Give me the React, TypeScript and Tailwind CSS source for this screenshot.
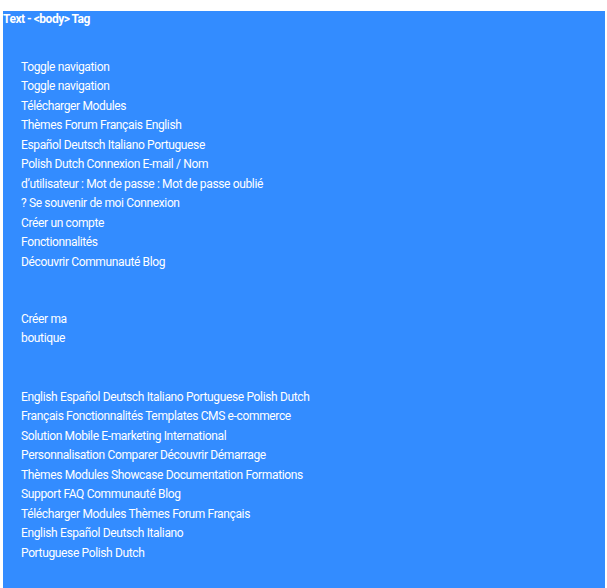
import React from "react";

const navLines = [
  "Toggle navigation",
  "Toggle navigation",
  "Télécharger Modules",
  "Thèmes Forum Français English",
  "Español Deutsch Italiano Portuguese",
  "Polish Dutch Connexion E-mail / Nom",
  "d’utilisateur : Mot de passe : Mot de passe oublié",
  "? Se souvenir de moi Connexion",
  "Créer un compte",
  "Fonctionnalités",
  "Découvrir Communauté Blog",
];

const shopLines = ["Créer ma", "boutique"];

const footerLines = [
  "English Español Deutsch Italiano Portuguese Polish Dutch",
  "Français Fonctionnalités Templates CMS e-commerce",
  "Solution Mobile E-marketing International",
  "Personnalisation Comparer Découvrir Démarrage",
  "Thèmes Modules Showcase Documentation Formations",
  "Support FAQ Communauté Blog",
  "Télécharger Modules Thèmes Forum Français",
  "English Español Deutsch Italiano",
  "Portuguese Polish Dutch",
];

function Lines({ items }: { items: string[] }) {
  return (
    <div className="flex flex-col">
      {items.map((line, i) => (
        <div key={i} className="h-[19.5px] leading-[19.5px] whitespace-nowrap">
          {line}
        </div>
      ))}
    </div>
  );
}

export default function App() {
  return (
    <div className="min-h-[588px] bg-white pt-[11px] pl-[3px] pr-[2px] overflow-hidden">
      <div
        className="min-h-[600px] bg-[#338cff] text-white text-[12px] tracking-[-0.36px]"
        style={{ fontFamily: "Roboto, 'Liberation Sans', sans-serif" }}
      >
        {/* body tag label */}
        <div className="h-[16px] leading-[16px] text-[12px] font-bold tracking-[-0.5px]">
          Text - &lt;body&gt; Tag
        </div>

        <div className="pl-[18px] pt-[30.5px]">
          <Lines items={navLines} />
          <div className="pt-[37.5px]">
            <Lines items={shopLines} />
          </div>
          <div className="pt-[39px]">
            <Lines items={footerLines} />
          </div>
        </div>
      </div>
    </div>
  );
}
